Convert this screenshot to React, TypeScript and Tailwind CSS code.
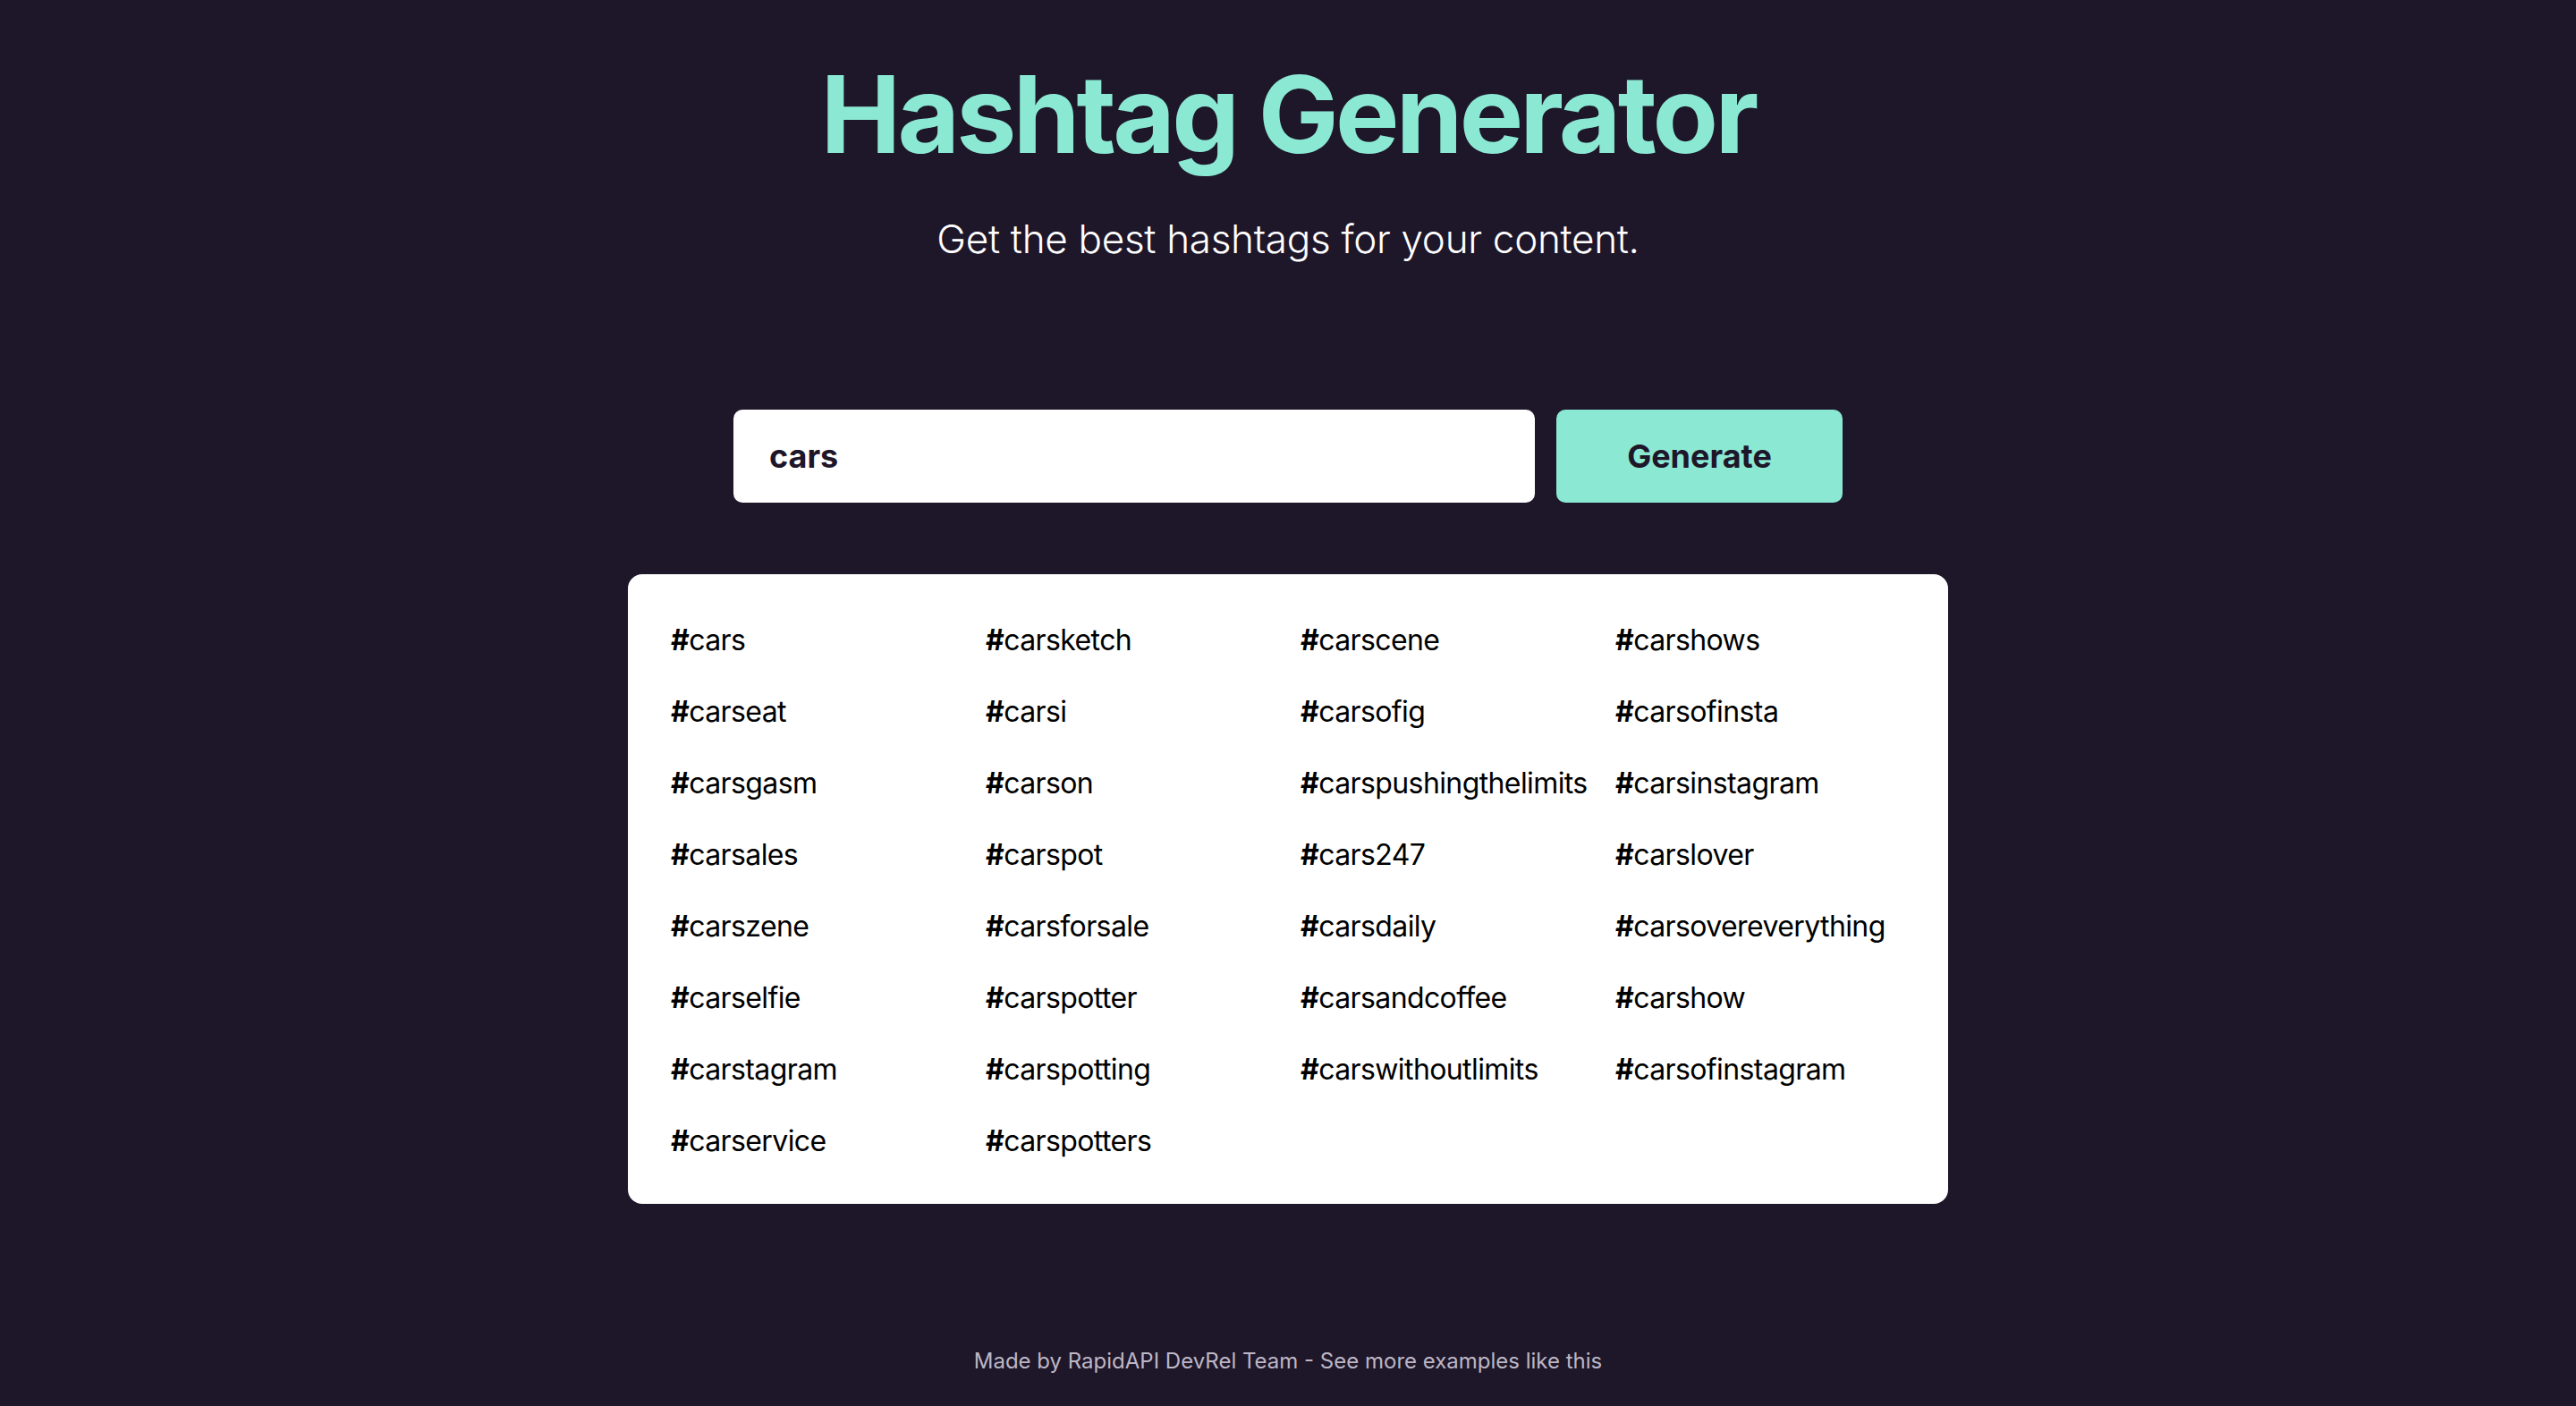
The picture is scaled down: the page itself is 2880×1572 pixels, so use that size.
import React from "react";

const tags = [
  "cars", "carsketch", "carscene", "carshows",
  "carseat", "carsi", "carsofig", "carsofinsta",
  "carsgasm", "carson", "carspushingthelimits", "carsinstagram",
  "carsales", "carspot", "cars247", "carslover",
  "carszene", "carsforsale", "carsdaily", "carsovereverything",
  "carselfie", "carspotter", "carsandcoffee", "carshow",
  "carstagram", "carspotting", "carswithoutlimits", "carsofinstagram",
  "carservice", "carspotters",
];

export default function App() {
  return (
    <div
      className="min-h-screen w-full bg-[#1e1629] flex flex-col items-center"
      style={{ fontFamily: "Inter, 'Noto Sans', sans-serif" }}
    >
      <h1 className="mt-[68px] text-[120px] leading-[120px] font-bold text-[#8be9d3] tracking-[-3.8px]">
        Hashtag Generator
      </h1>
      <p className="mt-[46px] text-[44px] leading-[66px] font-light text-white tracking-[-0.3px]">
        Get the best hashtags for your content.
      </p>

      <div className="mt-[158px] flex gap-[24px]">
        <div className="w-[896px] h-[104px] rounded-[10px] bg-white flex items-center px-[40px]">
          <span className="text-[36px] font-bold text-[#1e1629]">cars</span>
        </div>
        <button className="w-[320px] h-[104px] rounded-[10px] bg-[#8be9d3] flex items-center justify-center text-[36px] font-bold text-[#1e1629]">
          Generate
        </button>
      </div>

      <div className="mt-[80px] w-[1476px] rounded-[16px] bg-white pt-[50px] pb-[46px] pl-[48px] pr-[48px] grid grid-cols-4 gap-x-[28px] gap-y-[32px]">
        {tags.map((t) => (
          <div key={t} className="text-[32px] leading-[48px] text-black whitespace-nowrap tracking-[-0.6px]">
            <span className="font-bold">#</span>
            {t}
          </div>
        ))}
      </div>

      <footer className="mt-[158px] text-[24px] leading-[36px] text-[#bcb7c6]">
        Made by RapidAPI DevRel Team - See more examples like this
      </footer>
    </div>
  );
}
